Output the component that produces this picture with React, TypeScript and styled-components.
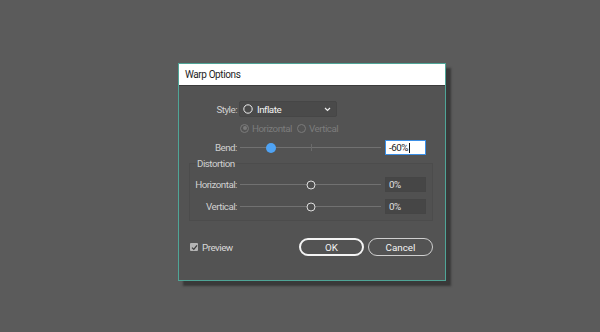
import React from 'react';
import styled, { createGlobalStyle } from 'styled-components';

const GlobalStyle = createGlobalStyle`
  html, body {
    margin: 0;
    padding: 0;
    background: #5b5b5b;
  }
  body {
    font-family: Roboto, 'Liberation Sans', sans-serif;
    font-size: 9.8px;
    letter-spacing: -0.5px;
    color: #d4d4d4;
  }
`;

// 배경 화면
const Page = styled.div`
  width: 600px;
  height: 332px;
  box-sizing: border-box;
  padding: 63px 0 0 178px;
`;

// 다이얼로그 창
const Dialog = styled.div`
  width: 268px;
  height: 218px;
  box-sizing: border-box;
  border: 1px solid #4fa597;
  background: #535353;
  box-shadow: 5px 5px 2px rgba(30, 30, 30, 0.55);
  display: flex;
  flex-direction: column;
`;

const TitleBar = styled.div`
  height: 21px;
  background: #ffffff;
  border-bottom: 1px solid #3c3c3c;
  display: flex;
  align-items: center;
  padding-left: 6px;
  font-size: 10px;
  letter-spacing: -0.4px;
  color: #1e1e1e;
`;

const Body = styled.div`
  display: flex;
  flex-direction: column;
  padding-top: 15px;
`;

const Row = styled.div<{ $mt?: number; $h?: number }>`
  display: flex;
  align-items: center;
  height: ${(p) => p.$h ?? 15}px;
  margin-top: ${(p) => p.$mt ?? 0}px;
`;

const Label = styled.div<{ $w: number }>`
  width: ${(p) => p.$w}px;
  text-align: right;
  flex-shrink: 0;
  color: #d0d0d0;
`;

// 드롭다운
const Select = styled.div`
  margin-left: 2px;
  width: 98px;
  height: 16px;
  box-sizing: border-box;
  background: #4a4a4a;
  border: 1px solid #464646;
  border-radius: 2px;
  display: flex;
  align-items: center;
  padding: 0 5px 0 3px;
  gap: 4px;
  color: #f2f2f2;
`;

const SelectText = styled.span`
  flex: 1;
`;

const RadioGroup = styled.div`
  margin-left: 61px;
  display: flex;
  align-items: center;
  gap: 5px;
  color: #7c7c7c;
`;

const RadioItem = styled.label`
  display: flex;
  align-items: center;
  gap: 3px;
`;

const Radio = styled.span<{ $checked?: boolean }>`
  width: 9px;
  height: 9px;
  box-sizing: border-box;
  border-radius: 50%;
  border: 1px solid #7a7a7a;
  display: flex;
  align-items: center;
  justify-content: center;
  &::after {
    content: '';
    width: 4px;
    height: 4px;
    border-radius: 50%;
    background: ${(p) => (p.$checked ? '#7a7a7a' : 'transparent')};
  }
`;

// 슬라이더
const Slider = styled.div`
  position: relative;
  margin-left: 3px;
  width: 141px;
  height: 15px;
  flex-shrink: 0;
`;

const Track = styled.div`
  position: absolute;
  left: 0;
  right: 0;
  top: 7px;
  height: 1px;
  background: #717171;
`;

const Tick = styled.div`
  position: absolute;
  left: 50%;
  top: 4px;
  width: 1px;
  height: 7px;
  background: #6a6a6a;
`;

const Thumb = styled.div<{ $active?: boolean }>`
  position: absolute;
  top: 50%;
  width: ${(p) => (p.$active ? 10 : 9)}px;
  height: ${(p) => (p.$active ? 10 : 9)}px;
  box-sizing: border-box;
  border-radius: 50%;
  transform: translate(-50%, -50%);
  background: ${(p) => (p.$active ? '#4fa3f4' : '#4e4e4e')};
  border: ${(p) => (p.$active ? 'none' : '1.5px solid #dcdcdc')};
`;

const Input = styled.div<{ $focused?: boolean }>`
  margin-left: 4px;
  width: 41px;
  height: 15px;
  box-sizing: border-box;
  border: 1px solid ${(p) => (p.$focused ? '#3b8fe6' : '#454545')};
  background: ${(p) => (p.$focused ? '#ffffff' : '#464646')};
  color: ${(p) => (p.$focused ? '#1c1c1c' : '#e0e0e0')};
  display: flex;
  align-items: center;
  padding-left: 3px;
`;

const Caret = styled.span`
  width: 1px;
  height: 10px;
  background: #111;
  margin-left: 1px;
`;

// 그룹 박스
const Group = styled.fieldset`
  margin: 3px 0 0 10px;
  width: 244px;
  height: 63px;
  box-sizing: border-box;
  border: 1px solid #4c4c4c;
  background: #515151;
  padding: 0;
  display: flex;
  flex-direction: column;
`;

const Legend = styled.legend`
  padding: 0 1px;
  margin-left: 6px;
  color: #d0d0d0;
`;

const Footer = styled.div`
  display: flex;
  align-items: center;
  margin-top: 17px;
  padding: 0 12px 0 11px;
`;

const Check = styled.label`
  display: flex;
  align-items: center;
  gap: 4px;
  flex: 1;
  color: #d8d8d8;
`;

const CheckBox = styled.span`
  width: 8px;
  height: 8px;
  background: #b4b4b4;
  border-radius: 1px;
  display: flex;
  align-items: center;
  justify-content: center;
`;

const Button = styled.button<{ $primary?: boolean }>`
  width: 65px;
  height: 18px;
  margin-left: 4px;
  box-sizing: border-box;
  border-radius: 9px;
  background: #535353;
  border: ${(p) => (p.$primary ? '2px solid #f4f4f4' : '1.5px solid #cfcfcf')};
  color: #f2f2f2;
  font: inherit;
  padding: 0;
`;

const SliderRow = ({
  label,
  labelWidth,
  value,
  pos,
  active,
  focused,
  mt,
}: {
  label: string;
  labelWidth: number;
  value: string;
  pos: number;
  active?: boolean;
  focused?: boolean;
  mt?: number;
}) => (
  <Row $mt={mt}>
    <Label $w={labelWidth}>{label}</Label>
    <Slider>
      <Track />
      {active && <Tick />}
      <Thumb $active={active} style={{ left: `${pos}%` }} />
    </Slider>
    <Input $focused={focused}>
      {value}
      {focused && <Caret />}
    </Input>
  </Row>
);

export default function App() {
  return (
    <>
      <GlobalStyle />
      <Page>
        <Dialog>
          <TitleBar>Warp Options</TitleBar>
          <Body>
            <Row $h={16}>
              <Label $w={58}>Style:</Label>
              <Select>
                <svg width="10" height="10" viewBox="0 0 10 10">
                  <circle cx="5" cy="5" r="4.2" fill="none" stroke="#eeeeee" strokeWidth="1" />
                </svg>
                <SelectText>Inflate</SelectText>
                <svg width="7" height="5" viewBox="0 0 7 5">
                  <path d="M1 1 L3.5 3.5 L6 1" fill="none" stroke="#eeeeee" strokeWidth="1.2" />
                </svg>
              </Select>
            </Row>
            <Row $mt={4} $h={14}>
              <RadioGroup>
                <RadioItem>
                  <Radio $checked />
                  Horizontal
                </RadioItem>
                <RadioItem>
                  <Radio />
                  Vertical
                </RadioItem>
              </RadioGroup>
            </Row>
            <SliderRow label="Bend:" labelWidth={58} value="-60%" pos={22} active focused mt={5} />
            <Group>
              <Legend>Distortion</Legend>
              <SliderRow label="Horizontal:" labelWidth={47} value="0%" pos={50} mt={8} />
              <SliderRow label="Vertical:" labelWidth={47} value="0%" pos={50} mt={7} />
            </Group>
            <Footer>
              <Check>
                <CheckBox>
                  <svg width="7" height="7" viewBox="0 0 7 7">
                    <path d="M1 3.6 L2.8 5.4 L6 1.4" fill="none" stroke="#3d3d3d" strokeWidth="1.3" />
                  </svg>
                </CheckBox>
                Preview
              </Check>
              <Button $primary>OK</Button>
              <Button>Cancel</Button>
            </Footer>
          </Body>
        </Dialog>
      </Page>
    </>
  );
}
